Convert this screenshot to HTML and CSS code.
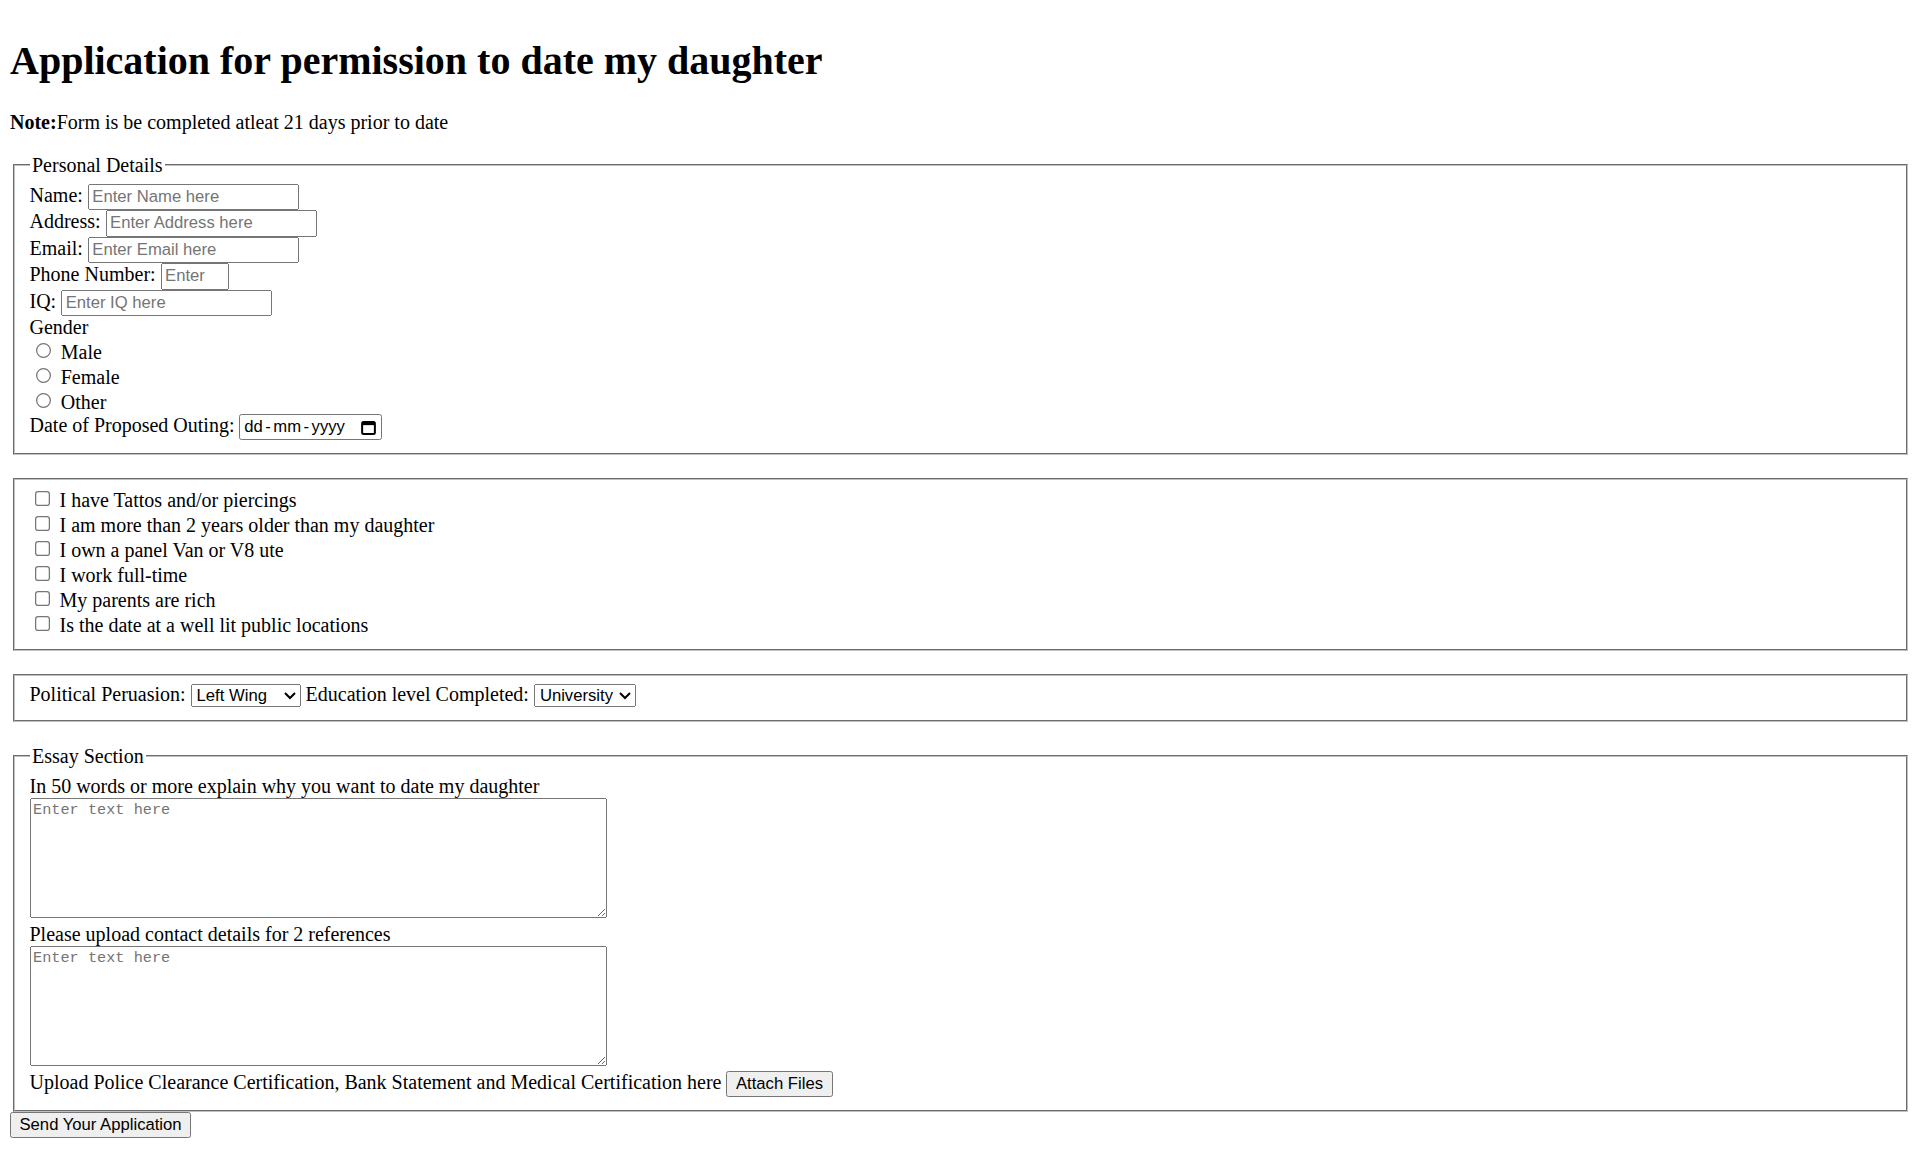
FILE: index.html
```html
<!DOCTYPE html>
<html>
<head>
<meta charset="utf-8">
<title>Application for permission to date my daughter</title>
<link rel="stylesheet" href="styles.css">
</head>
<body class="page">
<h1 class="title">Application for permission to date my daughter</h1>
<p class="note"><b>Note:</b>Form is be completed atleat 21 days prior to date</p>
<form class="form">
<fieldset class="box">
<legend class="legend">Personal Details</legend>
<label>Name:</label> <input class="text-in" type="text" placeholder="Enter Name here"><br>
<label>Address:</label> <input class="text-in" type="text" placeholder="Enter Address here"><br>
<label>Email:</label> <input class="text-in" type="text" placeholder="Enter Email here"><br>
<label>Phone Number:</label> <input class="text-in phone-in" type="text" placeholder="Enter"><br>
<label>IQ:</label> <input class="text-in" type="text" placeholder="Enter IQ here"><br>
<label>Gender</label><br>
<input type="radio" name="g"> <label>Male</label><br>
<input type="radio" name="g"> <label>Female</label><br>
<input type="radio" name="g"> <label>Other</label><br>
<label>Date of Proposed Outing:</label> <span class="date-box"><span class="date-text">dd<span class="sep">-</span>mm<span class="sep">-</span>yyyy</span><svg class="cal" width="12" height="12" viewBox="0 0 12 12"><rect x="0.9" y="1.5" width="10.2" height="9.6" rx="1.2" fill="none" stroke="#000" stroke-width="1.6"/><rect x="0.9" y="1.5" width="10.2" height="2.6" fill="#000"/></svg></span>
</fieldset>
<br>
<fieldset class="box">
<input type="checkbox"> <label>I have Tattos and/or piercings</label><br>
<input type="checkbox"> <label>I am more than 2 years older than my daughter</label><br>
<input type="checkbox"> <label>I own a panel Van or V8 ute</label><br>
<input type="checkbox"> <label>I work full-time</label><br>
<input type="checkbox"> <label>My parents are rich</label><br>
<input type="checkbox"> <label>Is the date at a well lit public locations</label>
</fieldset>
<br>
<fieldset class="box">
<label>Political Peruasion:</label> <select class="sel sel-pol"><option>Left Wing</option><option>Right Wing</option><option>Centre</option></select>
<label>Education level Completed:</label> <select class="sel sel-edu"><option>University</option><option>High School</option><option>TAFE</option></select>
</fieldset>
<br>
<fieldset class="box">
<legend class="legend">Essay Section</legend>
<label>In 50 words or more explain why you want to date my daughter</label><br>
<textarea class="essay" placeholder="Enter text here"></textarea><br>
<label>Please upload contact details for 2 references</label><br>
<textarea class="essay" placeholder="Enter text here"></textarea><br>
<label>Upload Police Clearance Certification, Bank Statement and Medical Certification here</label> <button type="button" class="btn">Attach Files</button>
</fieldset>
<button type="button" class="btn">Send Your Application</button>
</form>
</body>
</html>
```
FILE: styles.css
```css
.page {
  zoom: 1.25;
  margin: 8px;
  background: #fff;
  color: #000;
  font-family: "Liberation Serif", "Times New Roman", serif;
  font-size: 16px;
}
.title {
  font-size: 2em;
  margin: 0.67em 0;
}
.note {
  margin: 1em 0;
}
.form {
  margin: 0;
}
.box {
  margin: 0 2px;
  padding: 0.35em 0.75em 0.625em;
  border: 2px groove rgb(192, 192, 192);
}
.legend {
  padding: 0 2px;
}
.text-in {
  font-family: "Liberation Sans", Arial, sans-serif;
  font-size: 13.333px;
  width: 169px;
  box-sizing: border-box;
}
.phone-in {
  width: 55px;
}
.sel, .btn {
  font-family: "Liberation Sans", Arial, sans-serif;
  font-size: 13.333px;
}
.sel-pol {
  width: 88px;
}
.sel-edu {
  width: 82px;
}
.date-box {
  display: inline-flex;
  align-items: center;
  justify-content: space-between;
  box-sizing: border-box;
  width: 114px;
  height: 21px;
  padding: 1px 4px 1px 3px;
  border: 1px solid #767676;
  border-radius: 2px;
  font-family: "Liberation Sans", Arial, sans-serif;
  font-size: 13.333px;
  vertical-align: baseline;
  background: #fff;
}
.date-text {
  white-space: nowrap;
}
.sep {
  padding: 0 2px;
}
.cal {
  display: block;
}
.essay {
  font-family: "Liberation Mono", "DejaVu Sans Mono", monospace;
  font-size: 12.2px;
  width: 462px;
  height: 96px;
  box-sizing: border-box;
}
```
